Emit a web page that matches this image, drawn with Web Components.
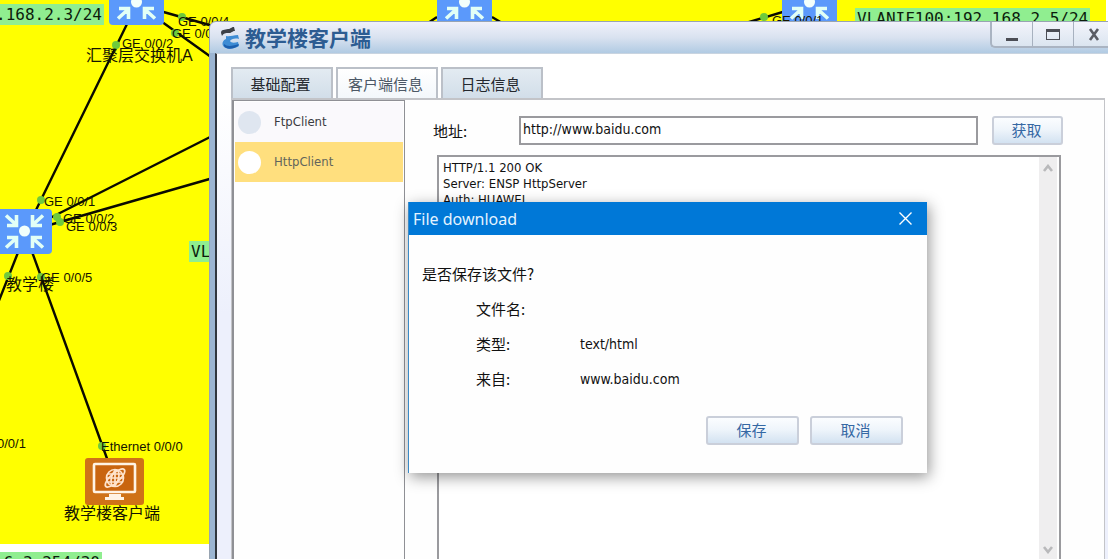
<!DOCTYPE html>
<html lang="zh-CN">
<head>
<meta charset="utf-8">
<title>教学楼客户端</title>
<style>
  html, body { margin: 0; height: 100%; overflow: hidden; }
  body {
    background: #fff;
    color: #111;
    font: 13px/16px "DejaVu Sans Condensed", "Noto Sans", "Noto Sans CJK SC", sans-serif;
  }
</style>
</head>
<body>
<net-desktop>
  <net-topology slot="topology">
    <net-tag style="left:-6px;top:4px">.168.2.3/24</net-tag>
    <net-tag style="left:855px;top:8px">VLANIF100:192.168.2.5/24</net-tag>
    <net-tag style="left:189px;top:241px">VL</net-tag>
    <net-tag style="left:-8px;top:552px">.6.3.254/30</net-tag>

    <net-switch style="left:109px;top:-20px"></net-switch>
    <net-switch style="left:437px;top:-20px"></net-switch>
    <net-switch style="left:782px;top:-20px"></net-switch>
    <net-switch style="left:-3px;top:209px"></net-switch>
    <net-client style="left:85px;top:458px"></net-client>

    <net-port style="left:178px;top:14px">GE 0/0/4</net-port>
    <net-port style="left:172px;top:26px">GE 0/0/3</net-port>
    <net-port style="left:122px;top:36px">GE 0/0/2</net-port>
    <net-port style="left:772px;top:13px">GE 0/0/1</net-port>
    <net-port style="left:44px;top:194px">GE 0/0/1</net-port>
    <net-port style="left:63px;top:211px">GE 0/0/2</net-port>
    <net-port style="left:66px;top:219px">GE 0/0/3</net-port>
    <net-port style="left:41px;top:270px">GE 0/0/5</net-port>
    <net-port style="left:-3px;top:436px">0/0/1</net-port>
    <net-port style="left:101px;top:439px">Ethernet 0/0/0</net-port>

    <net-name style="left:86px;top:45px">汇聚层交换机A</net-name>
    <net-name style="left:6px;top:274px">教学楼</net-name>
    <net-name style="left:64px;top:503px">教学楼客户端</net-name>
  </net-topology>
  <client-window slot="window" heading="教学楼客户端">
    <tab-strip slot="tabs">
      <tab-item>基础配置</tab-item>
      <tab-item active>客户端信息</tab-item>
      <tab-item>日志信息</tab-item>
    </tab-strip>
    <client-list slot="list">
      <client-item>FtpClient</client-item>
      <client-item active>HttpClient</client-item>
    </client-list>
    <http-form slot="form"></http-form>
  </client-window>
  <file-dialog slot="dialog" heading="File download"></file-dialog>
</net-desktop>

<script>
const define = (name, html, setup) => {
  const template = document.createElement('template');
  template.innerHTML = html;
  customElements.define(name, class extends HTMLElement {
    constructor() {
      super();
      this.attachShadow({ mode: 'open' }).append(template.content.cloneNode(true));
    }
    connectedCallback() { if (setup) setup(this, this.shadowRoot); }
  });
};

/* ---------- topology ---------- */

define('net-desktop', `
<style>
  :host { display: block; position: relative; height: 100vh; overflow: hidden; }
</style>
<slot name="topology"></slot><slot name="window"></slot><slot name="dialog"></slot>`);

define('net-topology', `
<style>
  :host { display: block; position: absolute; inset: 0; overflow: hidden; }
  .area { position: absolute; inset: 0 2px 15px 0; background: #ff0; }
  svg { position: absolute; left: 0; top: 0; overflow: visible; }
</style>
<div class="area"></div>
<svg width="1108" height="559" aria-hidden="true">
  <g stroke="#0a0a00" stroke-width="2.4">
    <path d="M128 22 36 210M160 11l60 17M158 19l60 43M46 220 220 132M46 226l174-50M19 250-2 303M31 249l78 215M437 17l-9 6M492 17l10 6M786 11l-40 12"/>
  </g>
  <g fill="#6fca3c">
    <circle cx="182" cy="17" r="4"/><circle cx="175" cy="33" r="4"/><circle cx="116" cy="45" r="4"/>
    <circle cx="41" cy="200" r="4"/><circle cx="57" cy="217" r="4"/><circle cx="60" cy="222" r="4"/>
    <circle cx="8" cy="276" r="4"/><circle cx="41" cy="277" r="4"/><circle cx="102" cy="446" r="4"/>
    <circle cx="764" cy="17" r="4"/>
  </g>
</svg>
<slot></slot>`);

define('net-tag', `
<style>
  :host {
    display: block; position: absolute; padding: 0 2px; background: #90ee90; color: #0c1c0c;
    font: 16px/21px "DejaVu Sans Mono", monospace; white-space: nowrap;
  }
</style><slot></slot>`);

define('net-port', `
<style>
  :host {
    display: block; position: absolute; color: #141400;
    font: 13px/16px "Liberation Sans", sans-serif; white-space: nowrap;
  }
</style><slot></slot>`);

define('net-name', `
<style>
  :host {
    display: block; position: absolute; color: #141400;
    font: 16px/22px "Liberation Sans", "Noto Sans CJK SC", sans-serif; white-space: nowrap;
  }
</style><slot></slot>`);

define('net-switch', `
<style>
  :host { display: block; position: absolute; }
  svg { display: block; }
</style>
<svg width="55" height="45" viewBox="0 0 55 45" role="img" aria-label="switch">
  <rect width="55" height="45" rx="4" fill="#5b99fb"/>
  <circle cx="27.500" cy="22" r="5.500" fill="#f2fffb"/>
  <path fill="none" stroke="#e2fff6" stroke-width="3.600" d="M9 6.500 19 15.500M19.500 6v10.500H10M46 6.500 36 15.500M35.500 6v10.500H45M9 38.500 19 29.500M19.500 39V28.500H10M46 38.500 36 29.500M35.500 39V28.500H45"/>
</svg>`);

define('net-client', `
<style>
  :host { display: block; position: absolute; }
  svg { display: block; }
</style>
<svg width="59" height="47" viewBox="0 0 59 47" role="img" aria-label="client">
  <rect width="59" height="47" rx="3" fill="#cf7218"/>
  <rect x="9" y="6" width="41" height="28" rx="1" fill="#c9650f" stroke="#fff3e4" stroke-width="2.600"/>
  <path fill="#fff3e4" d="M24 36h12v3h3v3H20v-3h4z"/>
  <g fill="none" stroke="#ffe4cc" stroke-width="1.700">
    <circle cx="30" cy="20" r="8.500"/>
    <ellipse cx="30" cy="20" rx="3.500" ry="8" transform="rotate(15 30 20)"/>
    <path d="M23 16h14M22 20h16M23 24h14M30 12v16"/>
    <ellipse cx="30" cy="20" rx="12.500" ry="4.500" transform="rotate(-42 30 20)"/>
  </g>
</svg>`);

/* ---------- shared button ---------- */

define('gloss-button', `
<style>
  :host { display: block; height: 29px; }
  button {
    display: block; box-sizing: border-box; width: 100%; height: 100%; margin: 0; padding: 0 2px 2px 0;
    border: 2px solid #cacfda; border-radius: 3px;
    background: linear-gradient(#fbfdff, #eff5fb 45%, #d3e2f1);
    color: #3568a4; font: 15px/22px "Noto Sans CJK SC", sans-serif;
  }
</style>
<button type="button"><slot></slot></button>`);

/* ---------- client window ---------- */

define('client-window', `
<style>
  :host {
    display: flex; flex-direction: column; box-sizing: border-box;
    position: absolute; left: 209px; top: 21px; right: -8px; bottom: -8px;
    border: 1px solid #98a4b2; border-radius: 7px 0 0 0; overflow: hidden;
    background: #9bb5d2;
  }
  header {
    display: flex; align-items: flex-start; flex: none; height: 31px; padding-left: 10px;
    background: linear-gradient(#f0f1fa, #d9e2f0 50%, #b1cbe3);
  }
  .logo { flex: none; margin-top: 4px; }
  h1 { flex: 1; margin: 0 0 0 5px; color: #2d5c92; font: bold 21px/30px "Noto Sans CJK SC", sans-serif; }
  nav {
    display: flex; box-sizing: border-box; height: 26px;
    border: solid #aab4c2; border-width: 0 0 2px 2px; border-radius: 0 0 0 5px; background: linear-gradient(#f3f4fb, #dbe5f0);
  }
  nav button { width: 41px; margin: 0; padding: 0; border: 0; border-right: 1px solid #a7b1bf; background: none; }
  nav svg { display: block; margin: auto; }
  .body {
    display: flex; flex-direction: column; flex: 1; min-height: 0; box-sizing: border-box;
    margin-left: 5px; padding: 13px 10px 0 14px;
    border-left: 2px solid #30363e; border-top: 1px solid #c9d4e0;
    background: linear-gradient(#fff, #fff 45px, #edf0fc 260px);
  }
  .panes {
    display: flex; flex: 1; min-height: 0; box-sizing: border-box;
    border: solid #c3c4c8; border-width: 2px 1px 0; background: #fefefe;
  }
</style>
<header>
  <svg class="logo" width="20" height="24" viewBox="0 0 20 24" aria-hidden="true">
    <path fill="#3c4047" d="M1 7C1 3 5 4 8 3c3 0 3-2 6-2l1 4c-3 0-3 2-6 2-4 0-5 0-7 3z"/>
    <path fill="#3e8cd4" d="M6 10c4 1 7-1 12-1l1 4c-4-1-8 0-9 2 1 2 4 2 8 1l1 4c-5 3-11 4-15 1-3-3-1-7 2-8z"/>
    <path fill="#1d5fae" d="M4 18c3 3 9 2 15 0l-1 2c-4 3-12 4-14 0z"/>
  </svg>
  <h1></h1>
  <nav>
    <button type="button" aria-label="最小化"><svg width="14" height="16" viewBox="0 0 14 16"><path fill="#4b4d55" d="M1 12h12v3H1z"/></svg></button>
    <button type="button" aria-label="最大化"><svg width="14" height="16" viewBox="0 0 14 16"><path fill="#4b4d55" fill-rule="evenodd" d="M0 3h14v11H0zM1 6h12v7H1z"/></svg></button>
    <button type="button" aria-label="关闭"><svg width="14" height="16" viewBox="0 0 14 16"><path fill="none" stroke="#5a5c64" stroke-width="2.600" d="M3 3l8 11M11 3 3 14"/></svg></button>
  </nav>
</header>
<div class="body">
  <slot name="tabs"></slot>
  <div class="panes"><slot name="list"></slot><slot name="form"></slot></div>
</div>`, (host, root) => { root.querySelector('h1').textContent = host.getAttribute('heading'); });

define('tab-strip', `
<style>
  :host { display: flex; gap: 3px; flex: none; height: 31px; }
</style><slot></slot>`);

define('tab-item', `
<style>
  :host { display: block; width: 102px; }
  button {
    display: block; box-sizing: border-box; width: 100%; height: 100%; margin: 0; padding: 0 3px 0 0;
    border: 2px solid #bbc0c8; border-bottom: 0;
    background: linear-gradient(#e3ebf2, #d2dee9); color: #24282e;
    font: 15px/22px "Noto Sans CJK SC", sans-serif;
  }
  :host([active]) button { background: linear-gradient(#fff, #f3f7fb); color: #4c5866; }
</style>
<button type="button"><slot></slot></button>`);

define('client-list', `
<style>
  :host {
    display: block; flex: none; box-sizing: border-box; width: 173px; padding: 1px;
    border: solid #8f9095; border-width: 1px 1px 0 2px; background: #fefefe;
  }
</style><slot></slot>`);

define('client-item', `
<style>
  :host { display: block; height: 40px; background: #faf9fc; color: #3a3b40; }
  :host([active]) { background: #ffdf7e; color: #62655c; --dot: #fff; }
  button {
    display: flex; align-items: center; gap: 13px; width: 100%; height: 100%; margin: 0; padding: 0 3px;
    border: 0; background: none; color: inherit; font: inherit;
  }
  i { width: 23px; height: 23px; border-radius: 50%; background: var(--dot, #dfe6f0); }
</style>
<button type="button"><i></i><slot></slot></button>`);

define('http-form', `
<style>
  :host { display: flex; flex-direction: column; flex: 1; min-width: 0; padding: 16px 41px 0 28px; }
  .row { display: flex; align-items: center; gap: 14px; }
  label { width: 72px; color: #111; font: 15px/22px "Noto Sans CJK SC", sans-serif; }
  input {
    flex: 1; min-width: 0; box-sizing: border-box; height: 29px; margin: 0; padding: 0 2px 3px;
    border: 2px solid #9a9a9e; border-radius: 0; background: #fff; color: #111;
    font: 14px/16px "DejaVu Sans Condensed", "Noto Sans", sans-serif;
  }
  gloss-button { width: 71px; }
  .response {
    display: flex; flex: 1; min-height: 0; margin: 10px 2px 3px 4px;
    border: 2px solid #9a9a9e; background: #fff;
  }
  textarea {
    flex: 1; margin: 0; padding: 3px 4px; border: 0; outline: 0; resize: none; overflow: hidden;
    background: none; color: #111; font: inherit;
  }
  .bar { display: flex; flex-direction: column; justify-content: space-between; width: 18px; margin-right: 2px; background: #efeeef; }
  .bar button { height: 22px; margin: 0; padding: 0; border: 0; background: none; }
  .bar svg { display: block; margin: auto; fill: none; stroke: #b9b9bb; stroke-width: 2.6; }
</style>
<div class="row">
  <label for="url">地址:</label>
  <input id="url" type="text" value="http://www.baidu.com">
  <gloss-button>获取</gloss-button>
</div>
<div class="response">
  <textarea aria-label="响应" readonly>HTTP/1.1 200 OK
Server: ENSP HttpServer
Auth: HUAWEI</textarea>
  <div class="bar">
    <button type="button" aria-label="向上滚动"><svg width="12" height="8" viewBox="0 0 12 8"><path d="M2 7l4-5 4 5"/></svg></button>
    <button type="button" aria-label="向下滚动"><svg width="12" height="8" viewBox="0 0 12 8"><path d="M2 1l4 5 4-5"/></svg></button>
  </div>
</div>`);

/* ---------- download dialog ---------- */

define('file-dialog', `
<style>
  :host {
    display: block; box-sizing: border-box; position: absolute; left: 408px; top: 202px; width: 519px;
    background: #fefefe; border-left: 1px solid #3b8ac6; box-shadow: 2px 4px 14px rgba(0, 0, 0, .42);
  }
  header { display: flex; align-items: center; height: 33px; padding-left: 4px; background: #0078d7; }
  h2 { flex: 1; margin: 0; color: #e4f3ff; font: 16px/20px "Noto Sans", sans-serif; }
  header button { width: 44px; height: 33px; margin: 0; padding: 0; border: 0; background: none; }
  header svg { display: block; margin: auto; }
  .content { padding: 27px 24px 28px 13px; font: 15px/24px "Noto Sans CJK SC", sans-serif; color: #111; }
  p { margin: 0; }
  dl { display: grid; grid-template-columns: 104px 1fr; row-gap: 11px; margin: 11px 0 0 54px; }
  dt, dd { margin: 0; height: 24px; }
  dd { font: 14px/24px "DejaVu Sans Condensed", "Noto Sans", sans-serif; }
  .actions { display: flex; justify-content: flex-end; gap: 11px; margin-top: 25px; }
  gloss-button { width: 93px; }
</style>
<header>
  <h2></h2>
  <button type="button" aria-label="关闭"><svg width="13" height="13" viewBox="0 0 13 13"><path fill="none" stroke="#fff" stroke-width="1.400" d="M.5.500l12 12M12.500.500l-12 12"/></svg></button>
</header>
<div class="content">
  <p>是否保存该文件?</p>
  <dl>
    <dt>文件名:</dt><dd></dd>
    <dt>类型:</dt><dd>text/html</dd>
    <dt>来自:</dt><dd>www.baidu.com</dd>
  </dl>
  <div class="actions">
    <gloss-button>保存</gloss-button>
    <gloss-button>取消</gloss-button>
  </div>
</div>`, (host, root) => { root.querySelector('h2').textContent = host.getAttribute('heading'); });
</script>
</body>
</html>
